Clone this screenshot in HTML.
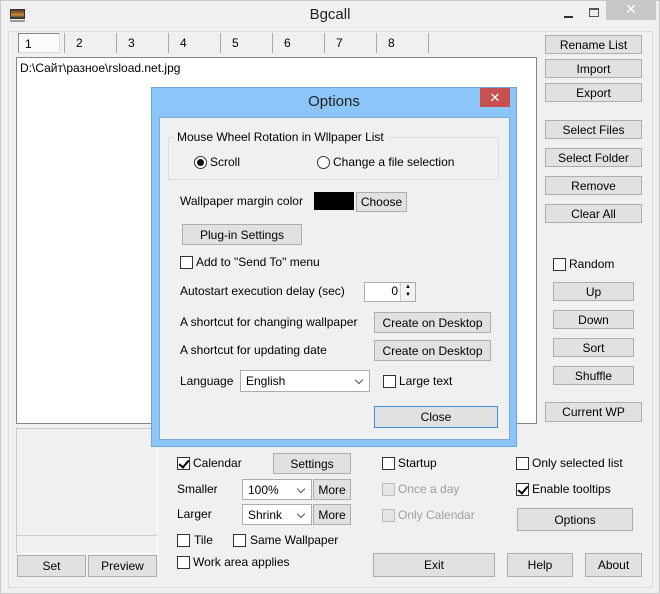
<!DOCTYPE html>
<html><head><meta charset="utf-8"><style>
*{box-sizing:border-box;margin:0;padding:0}
body{width:660px;height:594px;overflow:hidden;background:#f0f0f0;font-family:"Liberation Sans","DejaVu Sans",sans-serif;font-size:12px;color:#000;position:relative}
.a{position:absolute;white-space:nowrap}
.b{position:absolute;border:1px solid #adadad;background:#e1e1e1;text-align:center;font-size:12px;display:flex;align-items:center;justify-content:center}
.cb{position:absolute;width:13px;height:13px;border:1px solid #333;background:#fff}
.cb.d{border-color:#bcbcbc;background:#e6e6e6}
.ck::after{content:"";position:absolute;left:3px;top:0px;width:4px;height:8px;border:solid #000;border-width:0 2px 2px 0;transform:rotate(40deg)}
.rd{position:absolute;width:13px;height:13px;border:1px solid #333;border-radius:50%;background:#fff}
.combo{position:absolute;background:#fff;border:1px solid #acacac;padding-left:5px;display:flex;align-items:center}
.combo::after{content:"";position:absolute;right:7px;top:50%;margin-top:-4px;width:5px;height:5px;border:solid #555;border-width:0 1.5px 1.5px 0;transform:rotate(45deg)}
</style></head><body>
<div class="a" style="left:0;top:0;width:660px;height:594px;border:1px solid #c8c8c8"></div>
<div class="a" style="left:10px;top:9px;width:15px;height:10px;background:linear-gradient(#5a3a1a,#c88a40 60%,#333);border:1px solid #333"></div>
<div class="a" style="left:10px;top:20px;width:15px;height:2px;background:#999"></div>
<div class="a" style="left:0;width:660px;top:6px;text-align:center;font-size:15px;color:#222">Bgcall</div>
<div class="a" style="left:564px;top:16px;width:9px;height:2px;background:#333"></div>
<div class="a" style="left:589px;top:8px;width:10px;height:9px;border:1px solid #555;border-top-width:2px"></div>
<div class="a" style="left:606px;top:0;width:50px;height:20px;background:#c7c7c7;color:#fff;text-align:center;font-size:14px;line-height:19px">✕</div>
<div class="a" style="left:8px;top:31px;width:645px;height:557px;border:1px solid #dcdcdc"></div>
<!-- tabs -->
<div class="a" style="left:18px;top:33px;width:42px;height:20px;border:1px solid #888;border-right-color:#ddd;border-bottom-color:#ddd;background:#fbfbfb"></div>
<div class="a" style="left:25px;top:37px">1</div>
<div class="a" style="left:76px;top:36px">2</div><div class="a" style="left:128px;top:36px">3</div><div class="a" style="left:180px;top:36px">4</div><div class="a" style="left:232px;top:36px">5</div><div class="a" style="left:284px;top:36px">6</div><div class="a" style="left:336px;top:36px">7</div><div class="a" style="left:388px;top:36px">8</div>
<div class="a" style="left:64px;top:33px;width:1px;height:20px;background:#aaa"></div>
<div class="a" style="left:116px;top:33px;width:1px;height:20px;background:#aaa"></div>
<div class="a" style="left:168px;top:33px;width:1px;height:20px;background:#aaa"></div>
<div class="a" style="left:220px;top:33px;width:1px;height:20px;background:#aaa"></div>
<div class="a" style="left:272px;top:33px;width:1px;height:20px;background:#aaa"></div>
<div class="a" style="left:324px;top:33px;width:1px;height:20px;background:#aaa"></div>
<div class="a" style="left:376px;top:33px;width:1px;height:20px;background:#aaa"></div>
<div class="a" style="left:428px;top:33px;width:1px;height:20px;background:#aaa"></div>
<div class="a" style="left:16px;top:57px;width:521px;height:367px;background:#fff;border:1px solid #828790"></div>
<div class="a" style="left:20px;top:61px">D:\Сайт\разное\rsload.net.jpg</div>
<!-- right buttons -->
<div class="b" style="left:545px;top:35px;width:97px;height:19px">Rename List</div>
<div class="b" style="left:545px;top:59px;width:97px;height:19px">Import</div>
<div class="b" style="left:545px;top:83px;width:97px;height:19px">Export</div>
<div class="b" style="left:545px;top:120px;width:97px;height:19px">Select Files</div>
<div class="b" style="left:545px;top:148px;width:97px;height:19px">Select Folder</div>
<div class="b" style="left:545px;top:176px;width:97px;height:19px">Remove</div>
<div class="b" style="left:545px;top:204px;width:97px;height:19px">Clear All</div>
<div class="cb" style="left:553px;top:258px"></div><div class="a" style="left:569px;top:257px">Random</div>
<div class="b" style="left:553px;top:282px;width:81px;height:19px">Up</div>
<div class="b" style="left:553px;top:310px;width:81px;height:19px">Down</div>
<div class="b" style="left:553px;top:338px;width:81px;height:19px">Sort</div>
<div class="b" style="left:553px;top:366px;width:81px;height:19px">Shuffle</div>
<div class="b" style="left:545px;top:402px;width:97px;height:20px">Current WP</div>
<!-- preview -->
<div class="a" style="left:16px;top:428px;width:142px;height:126px;border:1px solid #ccc;border-right-color:#fff;border-bottom-color:#fff"></div>
<div class="a" style="left:16px;top:535px;width:141px;height:1px;background:#ccc"></div>
<div class="b" style="left:17px;top:555px;width:69px;height:22px">Set</div>
<div class="b" style="left:88px;top:555px;width:69px;height:22px">Preview</div>
<!-- bottom -->
<div class="cb ck" style="left:177px;top:457px"></div><div class="a" style="left:193px;top:456px">Calendar</div>
<div class="b" style="left:273px;top:453px;width:78px;height:21px">Settings</div>
<div class="a" style="left:177px;top:482px">Smaller</div>
<div class="combo" style="left:242px;top:479px;width:70px;height:21px">100%</div>
<div class="b" style="left:313px;top:479px;width:38px;height:21px">More</div>
<div class="a" style="left:177px;top:507px">Larger</div>
<div class="combo" style="left:242px;top:504px;width:70px;height:21px">Shrink</div>
<div class="b" style="left:313px;top:504px;width:38px;height:21px">More</div>
<div class="cb" style="left:177px;top:534px"></div><div class="a" style="left:194px;top:533px">Tile</div>
<div class="cb" style="left:233px;top:534px"></div><div class="a" style="left:250px;top:533px">Same Wallpaper</div>
<div class="cb" style="left:177px;top:556px"></div><div class="a" style="left:193px;top:555px">Work area applies</div>
<div class="cb" style="left:382px;top:457px"></div><div class="a" style="left:398px;top:456px">Startup</div>
<div class="cb d" style="left:382px;top:483px"></div><div class="a" style="left:398px;top:482px;color:#a0a0a0">Once a day</div>
<div class="cb d" style="left:382px;top:509px"></div><div class="a" style="left:398px;top:508px;color:#a0a0a0">Only Calendar</div>
<div class="cb" style="left:516px;top:457px"></div><div class="a" style="left:532px;top:456px">Only selected list</div>
<div class="cb ck" style="left:516px;top:483px"></div><div class="a" style="left:532px;top:482px">Enable tooltips</div>
<div class="b" style="left:517px;top:508px;width:116px;height:23px">Options</div>
<div class="b" style="left:373px;top:553px;width:122px;height:24px">Exit</div>
<div class="b" style="left:507px;top:553px;width:66px;height:24px">Help</div>
<div class="b" style="left:585px;top:553px;width:57px;height:24px">About</div>
<!-- dialog -->
<div class="a" style="left:151px;top:87px;width:366px;height:360px;background:#8cc5f7;border:1px solid #6fa6d8"></div>
<div class="a" style="left:151px;top:93px;width:366px;text-align:center;font-size:15px;color:#222">Options</div>
<div class="a" style="left:480px;top:88px;width:30px;height:19px;background:#c75050;color:#fff;text-align:center;font-size:13px;line-height:19px">✕</div>
<div class="a" style="left:159px;top:117px;width:351px;height:323px;background:#f0f0f0;border:1px solid #7aa9d6"></div>
<div class="a" style="left:168px;top:137px;width:331px;height:43px;border:1px solid #dcdcdc"></div>
<div class="a" style="left:174px;top:130px;padding:0 3px;background:#f0f0f0">Mouse Wheel Rotation in Wllpaper List</div>
<div class="rd" style="left:194px;top:156px"><div style="position:absolute;left:2px;top:2px;width:7px;height:7px;border-radius:50%;background:#111"></div></div>
<div class="a" style="left:210px;top:155px">Scroll</div>
<div class="rd" style="left:317px;top:156px"></div><div class="a" style="left:333px;top:155px">Change a file selection</div>
<div class="a" style="left:180px;top:194px">Wallpaper margin color</div>
<div class="a" style="left:314px;top:192px;width:40px;height:18px;background:#000"></div>
<div class="b" style="left:356px;top:192px;width:51px;height:20px">Choose</div>
<div class="b" style="left:182px;top:224px;width:120px;height:21px">Plug-in Settings</div>
<div class="cb" style="left:180px;top:256px"></div><div class="a" style="left:196px;top:255px">Add to "Send To" menu</div>
<div class="a" style="left:180px;top:284px">Autostart execution delay (sec)</div>
<div class="a" style="left:364px;top:282px;width:52px;height:20px;background:#fff;border:1px solid #acacac"></div>
<div class="a" style="left:388px;top:284px;width:10px;text-align:right">0</div>
<div class="a" style="left:400px;top:283px;width:15px;height:18px;border-left:1px solid #ccc;background:#f3f3f3;font-size:6px;line-height:8px;text-align:center">▲<br>▼</div>
<div class="a" style="left:180px;top:315px">A shortcut for changing wallpaper</div>
<div class="b" style="left:374px;top:312px;width:117px;height:21px">Create on Desktop</div>
<div class="a" style="left:180px;top:343px">A shortcut for updating date</div>
<div class="b" style="left:374px;top:340px;width:117px;height:21px">Create on Desktop</div>
<div class="a" style="left:180px;top:374px">Language</div>
<div class="combo" style="left:240px;top:370px;width:130px;height:22px">English</div>
<div class="cb" style="left:383px;top:375px"></div><div class="a" style="left:399px;top:374px">Large text</div>
<div class="b" style="left:374px;top:406px;width:124px;height:22px;border-color:#3c8ee0">Close</div>
</body></html>
